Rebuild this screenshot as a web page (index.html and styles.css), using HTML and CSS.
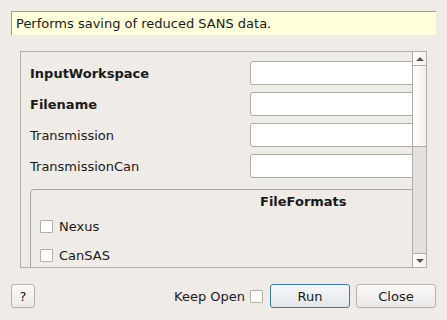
FILE: index.html
```html
<!DOCTYPE html>
<html lang="en">
<head>
  <meta charset="UTF-8">
  <title>SANSSave</title>
  <link rel="stylesheet" href="styles.css">
</head>
<body>
  <div class="dialog">
    <div class="description">Performs saving of reduced SANS data.</div>

    <div class="scroll-area">
      <div class="viewport">
        <div class="props">
          <label class="prop-label required">InputWorkspace</label>
          <div class="field"><input type="text"></div>
          <label class="prop-label required">Filename</label>
          <div class="field"><input type="text"></div>
          <label class="prop-label">Transmission</label>
          <div class="field"><input type="text"></div>
          <label class="prop-label">TransmissionCan</label>
          <div class="field"><input type="text"></div>
        </div>

        <div class="group">
          <div class="group-title">FileFormats</div>
          <div class="check-row"><span class="check"></span>Nexus</div>
          <div class="check-row"><span class="check"></span>CanSAS</div>
        </div>
      </div>

      <div class="scrollbar">
        <div class="sb-btn"><span class="arrow up"></span></div>
        <div class="sb-thumb"></div>
        <div class="sb-track"></div>
        <div class="sb-btn down"><span class="arrow dn"></span></div>
      </div>
    </div>

    <div class="footer">
      <button class="btn help">?</button>
      <div class="spacer"></div>
      <span class="keep">Keep Open</span>
      <span class="check keep-box"></span>
      <button class="btn default">Run</button>
      <button class="btn">Close</button>
    </div>
  </div>
</body>
</html>
```

FILE: styles.css
```css
/* General */
body {
  margin: 0;
  background: #efebe7;
  font-family: 'DejaVu Sans', sans-serif;
  font-size: 13px;
  color: #1a1a1a;
  overflow: hidden;
}

.dialog {
  display: flex;
  flex-direction: column;
  height: 320px;
}

/* Description strip */
.description {
  margin: 11px 11px 0;
  height: 23px;
  line-height: 23px;
  padding-left: 4px;
  background: #ffffdc;
  border-top: 1px solid #a09c98;
  border-left: 1px solid #a09c98;
  white-space: nowrap;
}

/* Scroll area */
.scroll-area {
  display: flex;
  margin: 16px 0 0 20px;
  width: 405px;
  height: 215px;
  border: 1px solid #b2aeaa;
}

.viewport {
  flex: 1;
  overflow: hidden;
  padding: 9px 0 0 9px;
}

.props {
  display: grid;
  grid-template-columns: 220px 170px;
  grid-auto-rows: 24px;
  row-gap: 7px;
  align-items: center;
}

.prop-label.required {
  font-weight: bold;
}

.field input {
  display: block;
  box-sizing: border-box;
  width: 180px;
  height: 24px;
  margin: 0;
  border: 1px solid #aeaaa6;
  border-radius: 3px;
  background: #fff;
}

.group {
  margin-top: 11px;
  width: 560px;
  height: 120px;
  border: 1px solid #aaa6a2;
  border-radius: 4px;
}

.group-title {
  font-weight: bold;
  padding: 4px 0 0 229px;
  height: 18px;
}

.check-row {
  display: flex;
  align-items: center;
  gap: 6px;
  height: 29px;
  padding-left: 9px;
}

.check {
  display: inline-block;
  box-sizing: border-box;
  width: 13px;
  height: 13px;
  border: 1px solid #b4b0ac;
  border-radius: 1px;
  background: #fff;
}

/* Scrollbar */
.scrollbar {
  width: 13px;
  display: flex;
  flex-direction: column;
  border-left: 1px solid #b2aeaa;
}

.sb-btn {
  height: 13px;
  display: flex;
  align-items: center;
  justify-content: center;
  background: linear-gradient(90deg, #ffffff, #f3f1ef);
  border-bottom: 1px solid #b2aeaa;
}

.sb-btn.down {
  border-bottom: none;
  border-top: 1px solid #b2aeaa;
}

.arrow {
  width: 0;
  height: 0;
  border-left: 4px solid transparent;
  border-right: 4px solid transparent;
}

.arrow.up {
  border-bottom: 4px solid #555;
}

.arrow.dn {
  border-top: 4px solid #555;
}

.sb-thumb {
  height: 80px;
  background: linear-gradient(90deg, #ffffff, #f1efed);
  border-bottom: 1px solid #b2aeaa;
}

.sb-track {
  flex: 1;
  background: #e3e1df;
}

/* Footer */
.footer {
  display: flex;
  align-items: center;
  margin: 16px 11px 0 11px;
  height: 24px;
}

.spacer {
  flex: 1;
}

.keep {
  margin-right: 5px;
}

.keep-box {
  margin-right: 7px;
}

.btn {
  box-sizing: border-box;
  height: 24px;
  width: 80px;
  margin: 0;
  padding: 0;
  font-family: inherit;
  font-size: 13px;
  color: #1a1a1a;
  border: 1px solid #b5b1ad;
  border-radius: 3px;
  background: linear-gradient(#fbfaf9, #ebe9e7);
}

.btn.help {
  width: 24px;
}

.btn.default {
  border-color: #3f78b0;
  background: linear-gradient(#f7f8f9, #e1e5ea);
  margin-right: 6px;
}
```
